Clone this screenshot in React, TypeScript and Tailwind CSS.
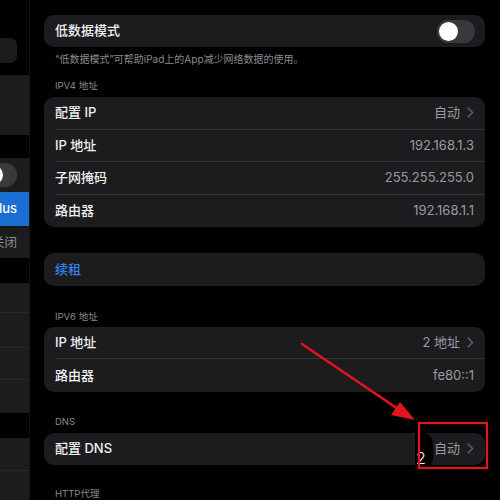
import React from "react";

const FONT = "font-['Inter','Noto_Sans_CJK_SC',sans-serif]";

function Chevron() {
  return (
    <svg width="7" height="11" viewBox="0 0 7 11" className="ml-[7px] shrink-0">
      <path d="M1.2 1.2 L5.6 5.5 L1.2 9.8" fill="none" stroke="#5f5f64" strokeWidth="1.6" strokeLinecap="round" strokeLinejoin="round" />
    </svg>
  );
}

type RowProps = { label: string; value?: string; chevron?: boolean; last?: boolean; blue?: boolean };

function Row({ label, value, chevron, last, blue }: RowProps) {
  return (
    <div className="pl-[11px]">
      <div className={`flex h-[32.5px] items-center justify-between pr-[11px] ${last ? "" : "border-b border-[#333336]"}`}>
        <span className={`text-[13px] font-medium ${blue ? "text-[#2f84e6]" : "text-[#f0f0f2]"}`}>{label}</span>
        {value !== undefined && (
          <span className="flex items-center text-[13px] text-[#9a9aa0]">
            {value}
            {chevron && <Chevron />}
          </span>
        )}
      </div>
    </div>
  );
}

function Card({ children }: { children: React.ReactNode }) {
  return <div className="overflow-hidden rounded-[10px] bg-[#1c1c1e]">{children}</div>;
}

function Header({ text, className = "" }: { text: string; className?: string }) {
  return <div className={`pl-[11px] text-[9.5px] leading-[12px] text-[#8a8a8f] ${className}`}>{text}</div>;
}

function Sidebar() {
  return (
    <div className="h-[500px] w-[30px] shrink-0 overflow-hidden border-r border-[#161617] bg-black">
      <div className="h-[38px]" />
      <div className="h-[25px] w-[17px] rounded-r-[7px] bg-[#1c1c1e]" />
      <div className="h-[12px]" />
      <div className="h-[60px] bg-[#1c1c1e]" />
      <div className="h-[23px]" />
      <div className="flex h-[34px] items-center bg-[#1c1c1e]">
        <div className="relative h-[24px] w-[17px] overflow-hidden rounded-r-full bg-[#3a3a3d]">
          <div className="absolute left-[-17px] top-[2px] h-[20px] w-[20px] rounded-full bg-white" />
        </div>
      </div>
      <div className="flex h-[34px] items-center justify-end overflow-hidden bg-[#1b6fd2] pr-[12px]">
        <span className="whitespace-nowrap text-[13px] font-medium text-white">Plus</span>
      </div>
      <div className="h-[2px] bg-[#141415]" />
      <div className="flex h-[30px] items-center justify-end overflow-hidden bg-[#1c1c1e] pr-[12px]">
        <span className="whitespace-nowrap text-[12.5px] text-[#8d8d92]">关闭</span>
      </div>
      <div className="h-[25px]" />
      <div className="bg-[#1c1c1e]">
        <div className="h-[30px] border-b border-[#2a2a2c]" />
        <div className="h-[35px] border-b border-[#2a2a2c]" />
        <div className="h-[32px] border-b border-[#2a2a2c]" />
        <div className="h-[33px]" />
      </div>
      <div className="h-[25px]" />
      <div className="bg-[#1c1c1e]">
        <div className="h-[33px] border-b border-[#2a2a2c]" />
        <div className="h-[40px]" />
      </div>
    </div>
  );
}

export default function App() {
  return (
    <div className={`relative flex h-[500px] w-[500px] overflow-hidden bg-black ${FONT}`}>
      <Sidebar />
      <div className="flex-1 pl-[14px] pr-[15px] pt-[15px]">
        <Card>
          <div className="flex h-[32px] items-center justify-between pl-[11px] pr-[10px]">
            <span className="text-[13px] font-medium text-[#f0f0f2]">低数据模式</span>
            <div className="flex h-[23px] w-[38px] items-center rounded-full bg-[#39393d] p-[2px]">
              <div className="h-[19px] w-[19px] rounded-full bg-white" />
            </div>
          </div>
        </Card>
        <div className="mt-[6px] pl-[11px] text-[10px] leading-[12px] text-[#8a8a8f]">
          “低数据模式”可帮助iPad上的App减少网络数据的使用。
        </div>
        <Header text="IPV4 地址" className="mb-[5px] mt-[15px]" />
        <Card>
          <Row label="配置 IP" value="自动" chevron />
          <Row label="IP 地址" value="192.168.1.3" />
          <Row label="子网掩码" value="255.255.255.0" />
          <Row label="路由器" value="192.168.1.1" last />
        </Card>
        <div className="mt-[26px]">
          <Card>
            <Row label="续租" blue last />
          </Card>
        </div>
        <Header text="IPV6 地址" className="mb-[4px] mt-[25px]" />
        <Card>
          <Row label="IP 地址" value="2 地址" chevron />
          <Row label="路由器" value="fe80::1" last />
        </Card>
        <Header text="DNS" className="mb-[5px] mt-[24px]" />
        <div className="relative">
          <Card>
            <Row label="配置 DNS" value="自动" chevron last />
          </Card>
          {/* smudge over the DNS value */}
          <div className="absolute left-[371px] top-0 h-[35px] w-[18px] rounded-r-[10px] bg-black" />
          <span className="absolute left-[372px] top-[15px] text-[16px] font-light leading-[20px] text-white">2</span>
        </div>
        <Header text="HTTP代理" className="mt-[23px]" />
      </div>

      {/* red annotation: arrow pointing at the DNS setting */}
      <svg className="pointer-events-none absolute left-0 top-0" width="500" height="500" viewBox="0 0 500 500">
        <line x1="302" y1="344" x2="404" y2="413" stroke="#e3141c" strokeWidth="2.6" strokeLinecap="round" />
        <polygon points="415,420 391,415 400,402" fill="#e3141c" />
        <rect x="419" y="423" width="68" height="45" fill="none" stroke="#e3141c" strokeWidth="2.2" />
      </svg>
    </div>
  );
}
